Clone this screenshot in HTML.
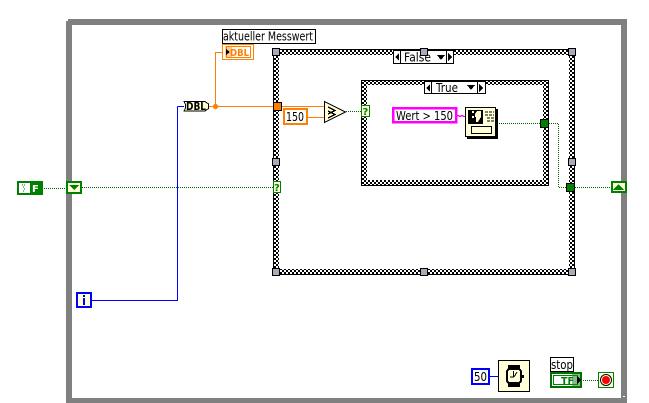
<!DOCTYPE html>
<html>
<head>
<meta charset="utf-8">
<style>
html,body{margin:0;padding:0;background:#fff;width:649px;height:403px;overflow:hidden}
svg{display:block}
text{font-family:"DejaVu Sans","Liberation Sans",sans-serif;font-size:12px;fill:#000}
</style>
</head>
<body>
<svg width="649" height="403" viewBox="0 0 649 403" xmlns="http://www.w3.org/2000/svg" shape-rendering="crispEdges">
<defs>
<pattern id="ch" width="4" height="4" patternUnits="userSpaceOnUse">
<rect width="4" height="4" fill="#fff"/>
<rect width="2" height="2" fill="#000"/>
<rect x="2" y="2" width="2" height="2" fill="#000"/>
</pattern>
</defs>

<!-- outer while loop -->
<path d="M68 19H627V403H621V25H72V398H621V403H66V21H68Z" fill="#808080"/>
<rect x="623" y="396" width="2" height="1" fill="#fff"/>

<!-- outer case frame -->
<path fill-rule="evenodd" d="M273 49H575V275H273ZM279 55V269H569V55Z" fill="url(#ch)"/>
<rect x="273.5" y="49.5" width="301" height="225" fill="none" stroke="#000"/>
<!-- inner case frame -->
<path fill-rule="evenodd" d="M361 80H549V186H361ZM367 85V180H543V85Z" fill="url(#ch)"/>
<rect x="361.5" y="80.5" width="187" height="105" fill="none" stroke="#000"/>

<!-- wires -->
<g fill="none">
<path d="M223 52.5H215.5V106.5" stroke="#ff8000"/>
<path d="M209 106.5H273M282 106.5H324M308 117.5H324" stroke="#ff8000"/>
<path d="M177.5 106.5H184M177.5 106.5V300.5H92" stroke="#0000ff"/>
<path d="M44 188.5H66M82 187.5H273M346 111.5H361M497 123.5H540M549 123.5H558.5V187.5H566M575 187.5H611M583 380.5H598" stroke="#006400" stroke-dasharray="1 1"/>
<path d="M457 115.5h2v1h2v-1h2v1h2" stroke="#ff00ff"/>
<path d="M490 376.5H498" stroke="#0000ff"/>
</g>
<circle cx="215.5" cy="106.5" r="2.6" fill="#ff8000" shape-rendering="auto"/>

<!-- label aktueller Messwert -->
<rect x="222.5" y="29.5" width="93" height="14" fill="#fff" stroke="#000"/>
<text x="223" y="40.5" textLength="90" lengthAdjust="spacingAndGlyphs">aktueller Messwert</text>

<!-- DBL indicator -->
<rect x="222.5" y="44.5" width="31" height="15" fill="#fff" stroke="#ff8000"/>
<rect x="226.5" y="46.5" width="24" height="11" fill="#fff" stroke="#ff8000"/>
<text x="230" y="56" textLength="19" lengthAdjust="spacingAndGlyphs" style="font-size:9.5px;font-weight:bold;fill:#ff8000">DBL</text>
<rect x="225" y="46" width="7" height="11" fill="#ff8000" fill-opacity=".4"/>
<path d="M226 49L230 52L226 55Z" fill="#000"/>

<!-- DBL conversion -->
<path d="M184 101.5H205L208.500 104V108.500L205 111H184L185.500 108V104.500Z" fill="#ffffd8" stroke="#000"/>
<text x="186" y="110" textLength="20" lengthAdjust="spacingAndGlyphs" style="font-size:10.500px;font-weight:bold">DBL</text>

<!-- tunnels -->
<rect x="273.500" y="102.500" width="8" height="8" fill="#ff8000" stroke="#000"/>
<rect x="540.500" y="119.500" width="8" height="8" fill="#008000" stroke="#000"/>
<rect x="566.500" y="183.500" width="8" height="8" fill="#008000" stroke="#000"/>

<!-- handles -->
<g fill="#a8acb8" stroke="#000">
<rect x="272.500" y="48.500" width="7" height="7"/>
<rect x="568.500" y="48.500" width="7" height="7"/>
<rect x="272.500" y="158.500" width="7" height="7"/>
<rect x="568.500" y="158.500" width="7" height="7"/>
<rect x="272.500" y="268.500" width="7" height="7"/>
<rect x="420.500" y="268.500" width="7" height="7"/>
<rect x="568.500" y="268.500" width="7" height="7"/>
</g>

<!-- case selector False -->
<rect x="393.500" y="50.500" width="60" height="13" fill="#fff" stroke="#000"/>
<path d="M400.500 50V64M446.500 50V64" stroke="#000"/>
<path d="M399 53V61L395 57Z" fill="#000"/>
<path d="M448 53V61L452 57Z" fill="#000"/>
<path d="M437 55H445L441 60Z" fill="#000"/>
<text x="404" y="61.500" textLength="27" lengthAdjust="spacingAndGlyphs">False</text>
<rect x="420.500" y="48.500" width="7" height="7" fill="#a8acb8" stroke="#000"/>

<!-- case selector True -->
<rect x="424.500" y="81.500" width="61" height="12" fill="#fff" stroke="#000"/>
<path d="M431.500 81V94M477.500 81V94" stroke="#000"/>
<path d="M430 84V92L426 88Z" fill="#000"/>
<path d="M479 84V92L483 88Z" fill="#000"/>
<path d="M467 85H475L471 90Z" fill="#000"/>
<text x="436" y="92" textLength="22" lengthAdjust="spacingAndGlyphs">True</text>

<!-- selector terminals -->
<rect x="273.500" y="181.500" width="7" height="11" fill="#ffffd8" stroke="#008000"/>
<text x="274" y="191" style="font-size:10px;font-weight:bold;fill:#008000">?</text>
<rect x="361.500" y="105.500" width="8" height="11" fill="#ffffd8" stroke="#008000"/>
<text x="362.500" y="115" style="font-size:10px;font-weight:bold;fill:#008000">?</text>

<!-- 150 constant -->
<rect x="284" y="109" width="23" height="15" fill="#fff" stroke="#ff8000" stroke-width="2"/>
<text x="286" y="121" textLength="18" lengthAdjust="spacingAndGlyphs">150</text>

<!-- comparison -->
<path d="M324.500 101.500V122.500L345.500 112Z" fill="#ffffd8" stroke="#000" shape-rendering="auto"/>
<path d="M328 107L335 110.500L328 114M328 111L335 114.500L328 118" fill="none" stroke="#000" stroke-width="1.500"/>

<!-- string constant -->
<rect x="393" y="108" width="63" height="14" fill="#fff" stroke="#ff00ff" stroke-width="2.500"/>
<text x="396" y="120" textLength="57" lengthAdjust="spacingAndGlyphs">Wert &gt; 150</text>

<!-- dialog icon -->
<rect x="467" y="109" width="31" height="30" fill="#000"/>
<rect x="465.500" y="107.500" width="30" height="29" fill="#ffffd8" stroke="#000"/>
<rect x="468" y="110" width="15" height="14" fill="#000"/>
<path d="M472 111h2v2h-2zM472 116h2v2h-2zM477 111h4v6l-3 5h-2v-5h-1v-3z" fill="#ffffd8"/>
<path d="M485 112h9M485 115h9M487 118h7M487 121h7" stroke="#000" stroke-dasharray="3 1"/>
<rect x="471.500" y="126.500" width="20" height="7" fill="#ffffd8" stroke="#000"/>

<!-- shift registers / loop terminals -->
<rect x="67" y="182" width="14" height="11" fill="#ffffd8" stroke="#008000" stroke-width="2"/>
<path d="M69 185H79L74 190Z" fill="#008000"/>
<rect x="612" y="182" width="14" height="10" fill="#ffffd8" stroke="#008000" stroke-width="2"/>
<path d="M613 190H624L618.500 184Z" fill="#008000"/>

<!-- boolean constant -->
<rect x="18" y="182" width="24" height="12" fill="#fff" stroke="#008000" stroke-width="2"/>
<rect x="30" y="183" width="11" height="10" fill="#008000"/>
<text x="32" y="192" style="font-size:10px;font-weight:bold;fill:#fff">F</text>
<path d="M22 185h4M23 187h2M24 189h1M23 191h2" stroke="#008000" stroke-dasharray="1 1"/>

<!-- i terminal -->
<rect x="77" y="293" width="14" height="14" fill="#ffffd8" stroke="#0000ff" stroke-width="2"/>
<path d="M83 295h2v2h-2zM83 298h2v7h-2z" fill="#0000ff"/>

<!-- 50 constant -->
<rect x="472" y="369" width="17" height="15" fill="#fff" stroke="#0000ff" stroke-width="2"/>
<text x="474" y="381" textLength="13" lengthAdjust="spacingAndGlyphs">50</text>

<!-- wait icon -->
<rect x="498.500" y="360.500" width="31" height="31" fill="#ffffd8" stroke="#000"/>
<path d="M508 365H520V369H508ZM508 383H520V387H508Z" fill="#000"/>
<rect x="506" y="368" width="16" height="16" rx="4" fill="#000"/>
<rect x="508" y="370" width="12" height="12" rx="2" fill="#ffffd8"/>
<path d="M513.500 371V377H510M514 377L517 372" fill="none" stroke="#000"/>
<rect x="522" y="375" width="2" height="3" fill="#000"/>

<!-- stop label + control -->
<rect x="550.500" y="357.500" width="23" height="14" fill="#fff" stroke="#000"/>
<text x="551" y="369" textLength="22" lengthAdjust="spacingAndGlyphs">stop</text>
<rect x="551" y="373" width="30" height="14" fill="#fff" stroke="#007000" stroke-width="2"/>
<rect x="553.500" y="375.500" width="24" height="9" fill="#fff" stroke="#008000"/>
<text x="561" y="384" textLength="13" lengthAdjust="spacingAndGlyphs" style="font-size:10px;font-weight:bold;fill:#008000">TF</text>
<rect x="572" y="374" width="8" height="12" fill="#208020" fill-opacity=".55"/>
<path d="M577 376L581 380L577 384Z" fill="#000"/>

<!-- stop terminal -->
<rect x="598.500" y="372.500" width="15" height="15" fill="#ffffd8" stroke="#008000"/>
<circle cx="606" cy="380" r="5.500" fill="#fff" stroke="#000" stroke-width="1" shape-rendering="auto"/>
<circle cx="606" cy="380" r="4" fill="#ff0000" shape-rendering="auto"/>
</svg>
</body>
</html>
